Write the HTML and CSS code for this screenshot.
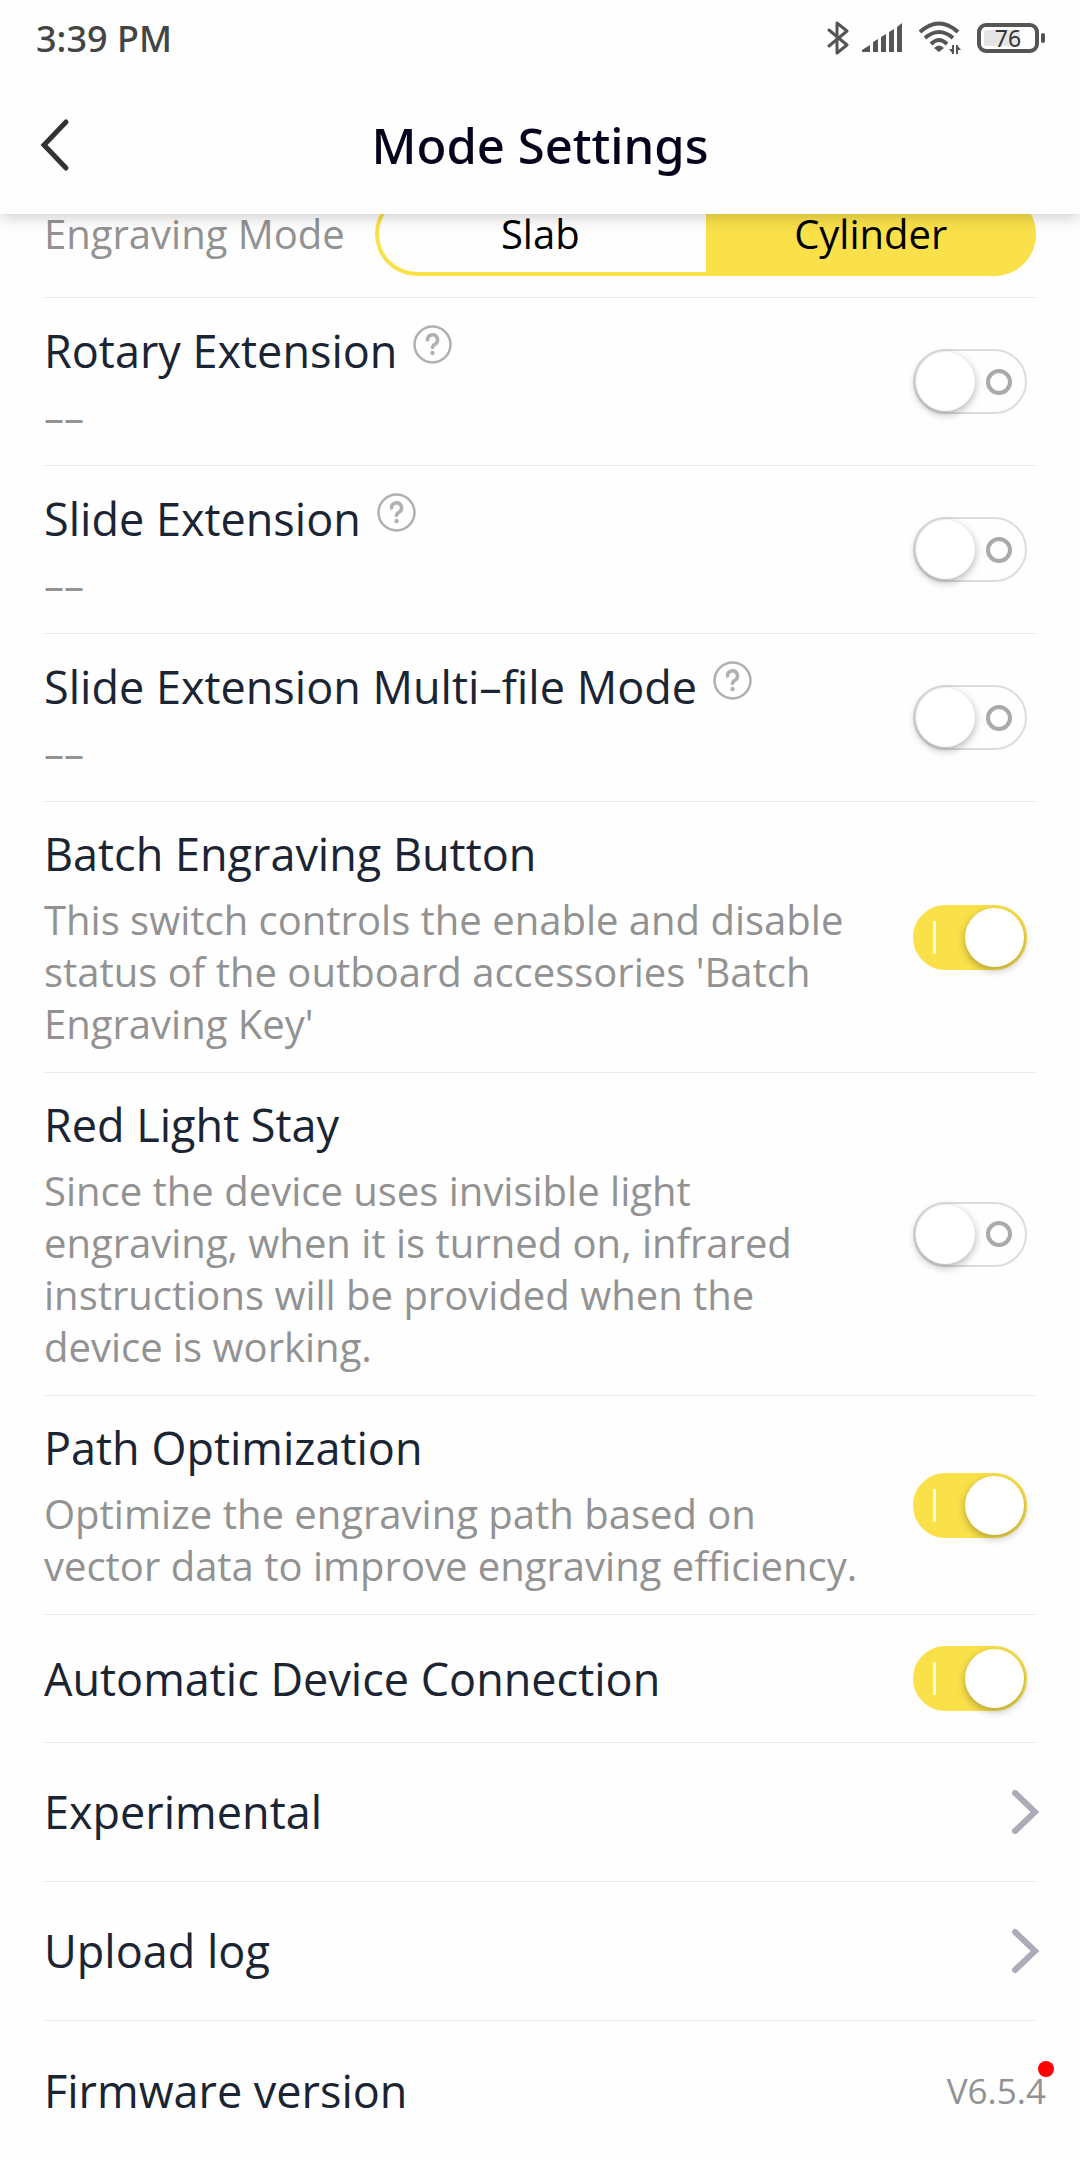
FILE: index.html
```html
<!DOCTYPE html>
<html lang="en">
  <head>
    <meta charset="UTF-8" />
    <meta name="viewport" content="width=device-width, initial-scale=1.0" />
    <title>Mode Settings</title>
    <link rel="stylesheet" href="styles.css">
  </head>
  <body>
    <header class="header">
      <div class="status-bar">
        <span class="time">3:39 PM</span>
        <div class="status-icons">
          <svg class="bluetooth" width="22" height="34" viewBox="0 0 22 34" fill="none" stroke="#555" stroke-width="3" stroke-linejoin="round" stroke-linecap="round">
            <path d="M2 9l18 15-10 8V2l10 8L2 25" />
          </svg>
          <svg class="signal" width="41" height="30" viewBox="0 0 41 30" fill="#555">
            <path d="M0 29v-2l8-5v7z" />
            <path d="M11 29V19l5-3v13z" />
            <path d="M19 29V14l5-3v18z" />
            <path d="M27 29V9l5-3v23z" />
            <path d="M35 29V4l5-4v29z" />
          </svg>
          <svg class="wifi" width="44" height="34" viewBox="0 0 44 34">
            <g fill="none" stroke="#555" stroke-width="4">
              <path d="M2 11Q21 -6 40 11" />
              <path d="M7 17Q21 5 35 17" />
              <path d="M13 23Q21 15 29 23" />
            </g>
            <path d="M16 27Q21 22 26 27L21 31z" fill="#555" />
            <path d="M35 24v9M39 24v9" stroke="#555" stroke-width="2" fill="none" />
            <path d="M31 28h4v5zM39 24v5h4z" fill="#555" />
          </svg>
          <div class="battery"><span class="battery-level">76</span></div>
        </div>
      </div>
      <div class="title-bar">
        <button class="back" aria-label="Back">
          <svg width="30" height="54" viewBox="0 0 30 54" fill="none" stroke="#333" stroke-width="5" stroke-linecap="round">
            <path d="M26 4L4 27l22 23" />
          </svg>
        </button>
        <h1>Mode Settings</h1>
      </div>
    </header>

    <main class="settings">
      <div class="row row-single">
        <span class="mode-label">Engraving Mode</span>
        <div class="segmented">
          <button>Slab</button>
          <button class="active">Cylinder</button>
        </div>
      </div>

      <div class="row">
        <div class="info">
          <div class="name">
            <label for="rotary">Rotary Extension</label>
            <button class="help" aria-label="About Rotary Extension">
              <svg width="39" height="39" viewBox="0 0 39 39" fill="none" stroke="#b0b0b0">
                <circle cx="19.500" cy="19.500" r="18" stroke-width="2.500" />
                <path d="M14.500 15a5 5 0 1 1 7.500 4.200c-2 1.200-2.500 2-2.500 3.300" stroke-width="3.500" stroke-linecap="round" />
                <circle cx="19.500" cy="28" r="2.200" fill="#b0b0b0" stroke="none" />
              </svg>
            </button>
          </div>
          <p>––</p>
        </div>
        <input type="checkbox" class="switch" id="rotary" />
      </div>

      <div class="row">
        <div class="info">
          <div class="name">
            <label for="slide">Slide Extension</label>
            <button class="help" aria-label="About Slide Extension">
              <svg width="39" height="39" viewBox="0 0 39 39" fill="none" stroke="#b0b0b0">
                <circle cx="19.500" cy="19.500" r="18" stroke-width="2.500" />
                <path d="M14.500 15a5 5 0 1 1 7.500 4.200c-2 1.200-2.500 2-2.500 3.300" stroke-width="3.500" stroke-linecap="round" />
                <circle cx="19.500" cy="28" r="2.200" fill="#b0b0b0" stroke="none" />
              </svg>
            </button>
          </div>
          <p>––</p>
        </div>
        <input type="checkbox" class="switch" id="slide" />
      </div>

      <div class="row">
        <div class="info">
          <div class="name">
            <label for="multifile">Slide Extension Multi–file Mode</label>
            <button class="help" aria-label="About Slide Extension Multi–file Mode">
              <svg width="39" height="39" viewBox="0 0 39 39" fill="none" stroke="#b0b0b0">
                <circle cx="19.500" cy="19.500" r="18" stroke-width="2.500" />
                <path d="M14.500 15a5 5 0 1 1 7.500 4.200c-2 1.200-2.500 2-2.500 3.300" stroke-width="3.500" stroke-linecap="round" />
                <circle cx="19.500" cy="28" r="2.200" fill="#b0b0b0" stroke="none" />
              </svg>
            </button>
          </div>
          <p>––</p>
        </div>
        <input type="checkbox" class="switch" id="multifile" />
      </div>

      <div class="row">
        <div class="info">
          <div class="name"><label for="batch">Batch Engraving Button</label></div>
          <p>This switch controls the enable and disable status of the outboard accessories 'Batch Engraving Key'</p>
        </div>
        <input type="checkbox" class="switch" id="batch" checked />
      </div>

      <div class="row">
        <div class="info">
          <div class="name"><label for="redlight">Red Light Stay</label></div>
          <p>Since the device uses invisible light engraving, when it is turned on, infrared instructions will be provided when the device is working.</p>
        </div>
        <input type="checkbox" class="switch" id="redlight" />
      </div>

      <div class="row">
        <div class="info">
          <div class="name"><label for="path">Path Optimization</label></div>
          <p>Optimize the engraving path based on vector data to improve engraving efficiency.</p>
        </div>
        <input type="checkbox" class="switch" id="path" checked />
      </div>

      <div class="row row-single">
        <div class="name"><label for="autoconnect">Automatic Device Connection</label></div>
        <input type="checkbox" class="switch" id="autoconnect" checked />
      </div>

      <a class="row row-link" href="#experimental">
        <span class="name">Experimental</span>
        <svg class="chevron" width="30" height="46" viewBox="0 0 30 46" fill="none" stroke="#abacb8" stroke-width="6" stroke-linecap="round">
          <path d="M5 4l20 19L5 42" />
        </svg>
      </a>

      <a class="row row-link" href="#upload-log">
        <span class="name">Upload log</span>
        <svg class="chevron" width="30" height="46" viewBox="0 0 30 46" fill="none" stroke="#abacb8" stroke-width="6" stroke-linecap="round">
          <path d="M5 4l20 19L5 42" />
        </svg>
      </a>

      <a class="row row-link" href="#firmware">
        <span class="name">Firmware version</span>
        <span class="version">V6.5.4</span>
      </a>
    </main>
  </body>
</html>
```
FILE: styles.css
```css
*,
*::before,
*::after {
  box-sizing: border-box;
}
body {
  margin: 0;
  background: #fefefe;
  color: #1b2433;
  font-family: 'Open Sans', 'Noto Sans', sans-serif;
  font-size: 40px;
}
button {
  border: none;
  background: none;
  padding: 0;
  font: inherit;
  color: #000;
  cursor: pointer;
}
svg {
  display: block;
}

/* header */
.header {
  position: sticky;
  top: 0;
  z-index: 1;
  background: #fefefe;
  box-shadow: 0 2px 16px rgba(0, 0, 0, 0.22);
  font-family: 'Noto Sans', sans-serif;
}
.status-bar {
  display: flex;
  justify-content: space-between;
  align-items: center;
  height: 76px;
  padding: 0 34px 0 36px;
}
.time {
  font-size: 36px;
  font-weight: 500;
  color: #444;
}
.status-icons {
  display: flex;
  align-items: center;
}
.signal {
  margin-left: 13px;
}
.wifi {
  margin: 0 15px;
}
.battery {
  position: relative;
  width: 62px;
  height: 30px;
  margin-right: 7px;
  border: 4px solid #555;
  border-radius: 9px;
  padding: 3px;
}
.battery::after {
  content: '';
  position: absolute;
  right: -10px;
  top: 6px;
  width: 4px;
  height: 10px;
  border-radius: 2px;
  background: #555;
}
.battery-level {
  display: block;
  height: 16px;
  border-radius: 2px;
  background: linear-gradient(to right, #e5e5e5 76%, transparent 76%);
  font-size: 23px;
  line-height: 16px;
  text-align: center;
  color: #333;
}
.title-bar {
  display: grid;
  grid-template-columns: 30px 1fr 30px;
  align-items: center;
  height: 138px;
  padding: 0 40px;
}
.title-bar h1 {
  margin: 0;
  text-align: center;
  font-size: 49px;
  font-weight: 500;
  color: #04051c;
}

/* settings list, scrolled a little way under the header */
.settings {
  margin-top: -44px;
  padding: 0 44px;
}
.row {
  display: flex;
  justify-content: space-between;
  align-items: center;
  padding: 22px 0;
  border-bottom: 1px solid #ebebeb;
}
.row-single {
  height: 128px;
}
.row-link {
  height: 139px;
  color: inherit;
  text-decoration: none;
}
.row-link:last-child {
  border-bottom: none;
}
.info {
  flex: 1;
  padding-right: 49px;
}
.name {
  display: flex;
  align-items: center;
  font-size: 45px;
  line-height: 60px;
}
.info p {
  margin: 10px 0 0;
  line-height: 52px;
  color: #929292;
}
.help {
  margin: 5px 0 17px 16px;
}
.mode-label {
  color: #929292;
}
.segmented {
  display: flex;
  flex: 0 1 661px;
  height: 84px;
  border-radius: 42px;
  box-shadow: inset 0 0 0 4px #fae14a;
  overflow: hidden;
}
.segmented button {
  flex: 1;
}
.segmented .active {
  background: #fae14a;
}

/* switch */
.switch {
  appearance: none;
  display: flex;
  flex: none;
  align-items: center;
  width: 114px;
  height: 65px;
  margin: 0 9px 0 0;
  padding: 0 1px;
  border: 2px solid #dcdcdc;
  border-radius: 33px;
  background: #fefefe;
  cursor: pointer;
}
.switch::before {
  content: '';
  width: 59px;
  height: 59px;
  border-radius: 50%;
  background: #fff;
  box-shadow: 0 3px 8px rgba(0, 0, 0, 0.3);
}
.switch::after {
  content: '';
  width: 26px;
  height: 26px;
  margin-left: 11px;
  border: 4px solid #aaa;
  border-radius: 50%;
}
.switch:checked {
  flex-direction: row-reverse;
  border-color: #fae14a;
  background: #fae14a;
}
.switch:checked::after {
  width: 3px;
  height: 33px;
  margin: 0 29px 0 0;
  border: none;
  border-radius: 0;
  background: #fffbe0;
}

.chevron {
  margin-right: -4px;
}
.version {
  position: relative;
  margin-right: -10px;
  font-size: 35px;
  color: #929292;
}
.version::after {
  content: '';
  position: absolute;
  right: -8px;
  top: -6px;
  width: 16px;
  height: 16px;
  border-radius: 50%;
  background: #f00;
}
```
